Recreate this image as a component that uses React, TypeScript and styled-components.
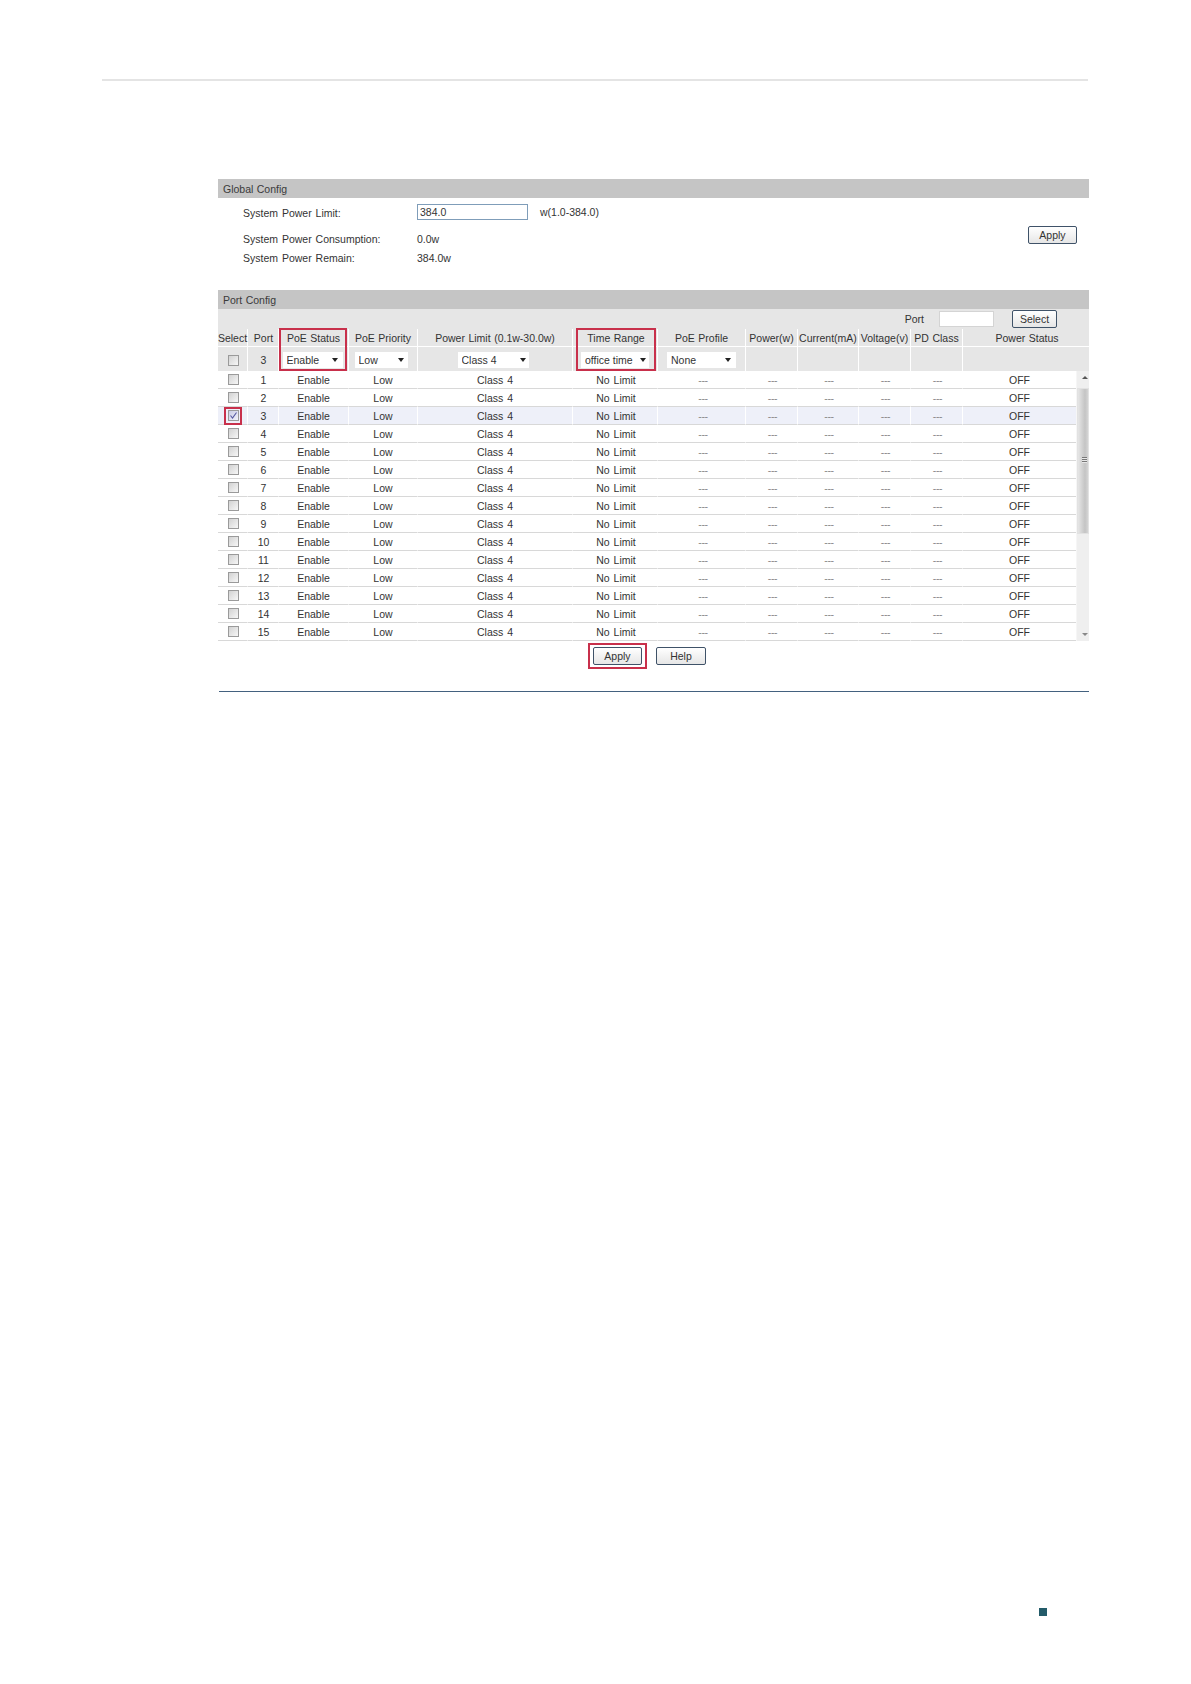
import React from 'react';
import styled, { createGlobalStyle } from 'styled-components';

const COLUMNS = '30px 31px 70px 69px 155px 85px 88px 52px 61px 52px 52px 1fr';

const GlobalStyle = createGlobalStyle`
    html, body {
        margin: 0;
        padding: 0;
        background: #fff;
    }
    body {
        font-family: "Liberation Sans", Arial, sans-serif;
        font-size: 10.5px;
        color: #333;
    }
`;

const Page = styled.div`
    display: flex;
    flex-direction: column;
    height: 1684px;
    padding-top: 79px;
    box-sizing: border-box;
    overflow: hidden;
`;

const TopRule = styled.div`
    margin-left: 102px;
    width: 986px;
    height: 2px;
    background: #e4e4e4;
`;

const Panel = styled.div`
    margin: 98px 0 0 218px;
    width: 871px;
`;

const SectionBar = styled.div`
    height: 19px;
    line-height: 21px;
    padding-left: 5px;
    background: #c5c5c5;
    color: #3a3a3a;
    word-spacing: 0.5px;
`;

const GlobalBody = styled.div`
    display: flex;
    justify-content: space-between;
    height: 92px;
    padding: 6px 12px 0 25px;
    box-sizing: border-box;
`;

const InfoList = styled.div`
    display: grid;
    grid-template-columns: 174px auto;
    grid-template-rows: 25px 18px 18px;
    align-content: start;
    align-items: center;
    row-gap: 1px;
    word-spacing: 1px;
`;

const LimitField = styled.div`
    display: flex;
    align-items: center;
    align-self: start;
    gap: 12px;
    height: 16px;
    word-spacing: 0;
`;

const LimitLabel = styled.div`
    align-self: start;
    line-height: 18px;
`;

const TextInput = styled.input<{ $width: number; $border: string }>`
    width: ${(p) => p.$width}px;
    height: 16px;
    box-sizing: border-box;
    border: 1px solid ${(p) => p.$border};
    padding: 0 2px;
    margin: 0;
    font: inherit;
    color: #333;
    background: #fff;
    outline: none;
`;

const Button = styled.button<{ $width?: number }>`
    display: block;
    width: ${(p) => p.$width || 49}px;
    height: 18px;
    padding: 0;
    margin: 0;
    box-sizing: border-box;
    border: 1px solid #3f5268;
    border-radius: 2px;
    background: linear-gradient(#ffffff, #e6e6e6);
    font: inherit;
    color: #333;
`;

const GlobalApply = styled.div`
    padding-top: 22px;
`;

const TableHead = styled.div`
    background: #e6e6e6;
`;

const Toolbar = styled.div`
    display: flex;
    align-items: center;
    justify-content: flex-end;
    height: 20px;
    padding-right: 32px;
`;

const ToolbarLabel = styled.span`
    margin-right: 15px;
`;

const ToolbarButton = styled.div`
    margin-left: 18px;
`;

const HeadRow = styled.div<{ $height: number; $line?: boolean }>`
    display: grid;
    grid-template-columns: ${COLUMNS};
    height: ${(p) => p.$height}px;
    box-sizing: border-box;
    border-bottom: ${(p) => (p.$line ? '1px solid #fff' : 'none')};
`;

const HeadCell = styled.div<{ $nudge?: number; $top?: number }>`
    position: relative;
    display: flex;
    align-items: center;
    justify-content: center;
    box-sizing: border-box;
    padding-left: ${(p) => p.$nudge || 0}px;
    padding-top: ${(p) => p.$top || 0}px;
    border-right: 1px solid #fff;
    white-space: nowrap;
    word-spacing: 0.6px;
    &:last-child {
        border-right: none;
    }
`;

const Highlight = styled.div<{ $left: number; $width: number }>`
    position: absolute;
    top: -1px;
    left: ${(p) => p.$left}px;
    width: ${(p) => p.$width}px;
    height: 43px;
    box-sizing: border-box;
    border: 2px solid #c8304b;
    pointer-events: none;
`;

const SelectBox = styled.div<{ $width: number; $shift?: number; $arrow: number }>`
    position: relative;
    width: ${(p) => p.$width}px;
    height: 16px;
    margin-right: ${(p) => p.$shift || 0}px;
    background: #fff;
    &::after {
        content: '';
        position: absolute;
        top: 6px;
        right: ${(p) => p.$arrow}px;
        border-left: 3.5px solid transparent;
        border-right: 3.5px solid transparent;
        border-top: 4px solid #222;
    }
`;

const SelectControl = styled.select`
    appearance: none;
    display: block;
    width: 100%;
    height: 16px;
    border: none;
    padding: 0 0 0 4px;
    margin: 0;
    background: transparent;
    font: inherit;
    color: #333;
    outline: none;
`;

const TableBody = styled.div`
    display: flex;
    height: 270px;
`;

const Rows = styled.div`
    width: 858px;
`;

const Row = styled.div<{ $selected?: boolean }>`
    display: grid;
    grid-template-columns: ${COLUMNS};
    height: 18px;
    background: ${(p) => (p.$selected ? '#eef0f9' : '#fff')};
`;

const Cell = styled.div<{ $muted?: boolean; $nudge?: number }>`
    position: relative;
    display: flex;
    align-items: center;
    justify-content: center;
    box-sizing: border-box;
    padding-left: ${(p) => p.$nudge || 0}px;
    border-right: 1px solid #fff;
    border-bottom: 1px solid #d8d8d8;
    word-spacing: 1px;
    color: ${(p) => (p.$muted ? '#8a8a8a' : '#333')};
    letter-spacing: ${(p) => (p.$muted ? '-0.4px' : '0')};
    &:last-child {
        border-right: none;
    }
`;

const CheckBox = styled.span<{ $checked?: boolean }>`
    display: flex;
    align-items: center;
    justify-content: center;
    width: 11px;
    height: 11px;
    margin-left: 1px;
    box-sizing: border-box;
    border: 1px solid #9a9a9a;
    background: ${(p) =>
        p.$checked ? 'linear-gradient(135deg, #c9cbe6, #f2f2fa)' : 'linear-gradient(135deg, #d2d2d2, #f7f7f7)'};
`;

const CheckMark = styled.svg`
    display: block;
    width: 9px;
    height: 9px;
`;

const CheckHighlight = styled.div`
    position: absolute;
    top: 0;
    left: 6px;
    width: 18px;
    height: 18px;
    box-sizing: border-box;
    border: 2px solid #c8304b;
`;

const ScrollBar = styled.div`
    position: relative;
    flex: 1;
    background: #efefef;
    border-left: 1px solid #f6f6f6;
`;

const ScrollArrow = styled.div<{ $down?: boolean }>`
    position: absolute;
    left: 5px;
    ${(p) => (p.$down ? 'bottom: 5px;' : 'top: 5px;')}
    border-left: 3px solid transparent;
    border-right: 3px solid transparent;
    ${(p) => (p.$down ? 'border-top: 3px solid #888;' : 'border-bottom: 3px solid #555;')}
`;

const ScrollThumb = styled.div`
    position: absolute;
    top: 17px;
    left: 0;
    right: 0;
    height: 146px;
    box-sizing: border-box;
    border: 1px solid #e2e2e2;
    background: linear-gradient(90deg, #e6e6e6, #c4c4c4 70%, #d4d4d4);
    &::after {
        content: '';
        position: absolute;
        top: 68px;
        left: 4px;
        width: 5px;
        height: 6px;
        background: repeating-linear-gradient(#777 0 1px, #e8e8e8 1px 2px);
    }
`;

const Actions = styled.div`
    display: flex;
    align-items: center;
    margin: 2px 0 0 370px;
    gap: 9px;
`;

const ApplyHighlight = styled.div`
    padding: 2px 3px;
    border: 2px solid #c8304b;
`;

const BottomRule = styled.div`
    margin: 22px 0 0 1px;
    height: 1px;
    background: #43617f;
`;

const PageMark = styled.div`
    margin: auto 0 68px 1039px;
    width: 8px;
    height: 8px;
    background: #235b69;
`;

const heads = [
    'Select',
    'Port',
    'PoE Status',
    'PoE Priority',
    'Power Limit (0.1w-30.0w)',
    'Time Range',
    'PoE Profile',
    'Power(w)',
    'Current(mA)',
    'Voltage(v)',
    'PD Class',
    'Power Status',
];

const headNudge: Record<string, number> = { 'Time Range': 2, 'Power Status': 2, Port: 1 };

const ports = Array.from({ length: 15 }, (_, i) => i + 1);

function Select({ value, width, shift, arrow }: { value: string; width: number; shift?: number; arrow: number }) {
    return (
        <SelectBox $width={width} $shift={shift} $arrow={arrow}>
            <SelectControl defaultValue={value}>
                <option>{value}</option>
            </SelectControl>
        </SelectBox>
    );
}

function App() {
    return (
        <Page>
            <GlobalStyle />
            <TopRule />
            <Panel>
                <SectionBar>Global Config</SectionBar>
                <GlobalBody>
                    <InfoList>
                        <LimitLabel>System Power Limit:</LimitLabel>
                        <LimitField>
                            <TextInput $width={111} $border="#7f9db9" defaultValue="384.0" />
                            <span>w(1.0-384.0)</span>
                        </LimitField>
                        <div>System Power Consumption:</div>
                        <div>0.0w</div>
                        <div>System Power Remain:</div>
                        <div>384.0w</div>
                    </InfoList>
                    <GlobalApply>
                        <Button>Apply</Button>
                    </GlobalApply>
                </GlobalBody>

                <SectionBar>Port Config</SectionBar>
                <TableHead>
                    <Toolbar>
                        <ToolbarLabel>Port</ToolbarLabel>
                        <TextInput $width={55} $border="#d4d4d4" />
                        <ToolbarButton>
                            <Button $width={45}>Select</Button>
                        </ToolbarButton>
                    </Toolbar>
                    <HeadRow $height={18} $line>
                        {heads.map((head) => (
                            <HeadCell key={head} $nudge={headNudge[head]}>
                                {head}
                                {head === 'PoE Status' && <Highlight $left={0} $width={68} />}
                                {head === 'Time Range' && <Highlight $left={3} $width={80} />}
                            </HeadCell>
                        ))}
                    </HeadRow>
                    <HeadRow $height={24}>
                        <HeadCell $top={2}>
                            <CheckBox />
                        </HeadCell>
                        <HeadCell $top={2} $nudge={1}>3</HeadCell>
                        <HeadCell $top={2}>
                            <Select value="Enable" width={60} shift={2} arrow={5} />
                        </HeadCell>
                        <HeadCell $top={2}>
                            <Select value="Low" width={53} shift={4} arrow={4} />
                        </HeadCell>
                        <HeadCell $top={2}>
                            <Select value="Class 4" width={71} shift={4} arrow={3} />
                        </HeadCell>
                        <HeadCell $top={2}>
                            <Select value="office time" width={68} arrow={3} />
                        </HeadCell>
                        <HeadCell $top={2}>
                            <Select value="None" width={69} arrow={5} />
                        </HeadCell>
                        <HeadCell />
                        <HeadCell />
                        <HeadCell />
                        <HeadCell />
                        <HeadCell />
                    </HeadRow>
                </TableHead>
                <TableBody>
                    <Rows>
                        {ports.map((port) => (
                            <Row key={port} $selected={port === 3}>
                                <Cell>
                                    <CheckBox $checked={port === 3}>
                                        {port === 3 && (
                                            <CheckMark viewBox="0 0 9 9">
                                                <path d="M1.5 4.5 L3.5 7 L7.5 1.5" fill="none" stroke="#5558a0" strokeWidth="1.1" />
                                            </CheckMark>
                                        )}
                                    </CheckBox>
                                    {port === 3 && <CheckHighlight />}
                                </Cell>
                                <Cell $nudge={1}>{port}</Cell>
                                <Cell>Enable</Cell>
                                <Cell>Low</Cell>
                                <Cell>Class 4</Cell>
                                <Cell $nudge={2}>No Limit</Cell>
                                <Cell $muted $nudge={3}>---</Cell>
                                <Cell $muted $nudge={2}>---</Cell>
                                <Cell $muted $nudge={2}>---</Cell>
                                <Cell $muted $nudge={2}>---</Cell>
                                <Cell $muted $nudge={2}>---</Cell>
                                <Cell>OFF</Cell>
                            </Row>
                        ))}
                    </Rows>
                    <ScrollBar>
                        <ScrollArrow />
                        <ScrollThumb />
                        <ScrollArrow $down />
                    </ScrollBar>
                </TableBody>
                <Actions>
                    <ApplyHighlight>
                        <Button>Apply</Button>
                    </ApplyHighlight>
                    <Button $width={50}>Help</Button>
                </Actions>
                <BottomRule />
            </Panel>
            <PageMark />
        </Page>
    );
}

export default App;
